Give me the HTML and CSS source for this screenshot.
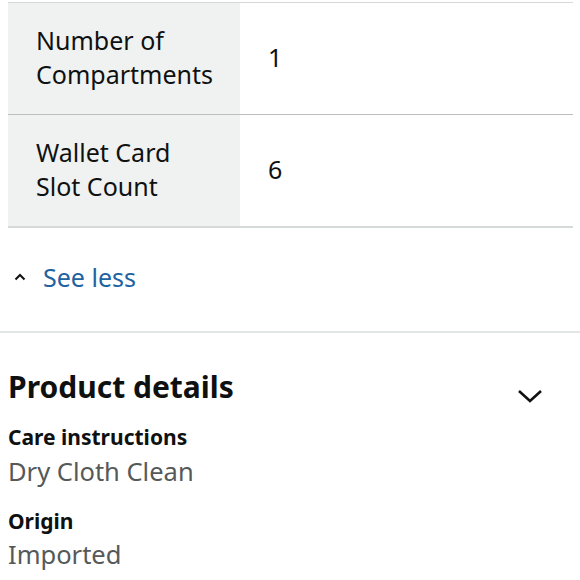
FILE: index.html
```html
<!DOCTYPE html>
<html>
<head>
<meta charset="utf-8">
<link rel="stylesheet" href="styles.css">
</head>
<body>
<table class="specs">
  <tr>
    <th>Number of Compartments</th>
    <td>1</td>
  </tr>
  <tr>
    <th>Wallet Card Slot Count</th>
    <td>6</td>
  </tr>
</table>
<div class="see-less">
  <svg class="caret" width="12" height="8" viewBox="0 0 12 8"><path d="M1.5 6.5 L6 2 L10.5 6.5" fill="none" stroke="#111" stroke-width="2"/></svg>
  <span class="link">See less</span>
</div>
<section class="details">
  <div class="details-head">
    <h2>Product details</h2>
    <svg class="chev" width="26" height="16" viewBox="0 0 26 16"><path d="M2 3 L13 13 L24 3" fill="none" stroke="#111" stroke-width="2.6"/></svg>
  </div>
  <div class="item">
    <div class="label">Care instructions</div>
    <div class="value">Dry Cloth Clean</div>
  </div>
  <div class="item">
    <div class="label">Origin</div>
    <div class="value">Imported</div>
  </div>
</section>
</body>
</html>
```
FILE: styles.css
```css
html, body {
  margin: 0;
  padding: 0;
  background: #fff;
  font-family: "Noto Sans", "Open Sans", sans-serif;
  color: #0f1111;
}
.specs {
  margin: 2px 7px 0 8px;
  width: 565px;
  border-collapse: collapse;
  border-top: 1px solid #d5d9d9;
}
.specs tr {
  border-bottom: 1px solid #bbbfbf;
}
.specs tr:last-child {
  border-bottom: 2px solid #d5d9d9;
}
.specs th {
  width: 180px;
  height: 107px;
  padding: 0 24px 4px 28px;
  background: #f0f2f2;
  text-align: left;
  font-weight: 400;
  font-size: 25px;
  line-height: 34px;
  vertical-align: middle;
}
.specs td {
  padding: 0 0 4px 28px;
  font-size: 25px;
  line-height: 34px;
  vertical-align: middle;
}
.see-less {
  display: flex;
  align-items: center;
  height: 97px;
  padding: 0 0 6px 14px;
  gap: 17px;
  border-bottom: 2px solid #e3e6e6;
}
.caret {
  display: block;
}
.link {
  color: #2162a1;
  font-size: 25px;
}
.details {
  padding: 0 8px;
}
.details-head {
  display: flex;
  justify-content: space-between;
  align-items: center;
  padding-top: 34px;
}
.details-head h2 {
  margin: 0;
  font-size: 30px;
  line-height: 40px;
  font-weight: 700;
}
.chev {
  margin: 18px 29px 0 0;
}
.item {
  margin-top: 16px;
}
.item + .item {
  margin-top: 18px;
}
.label {
  font-size: 21px;
  font-weight: 700;
  line-height: 28px;
}
.value {
  margin-top: 2px;
  font-size: 25.5px;
  line-height: 36px;
  color: #565959;
}
.item + .item .value {
  margin-top: 1px;
}
```
